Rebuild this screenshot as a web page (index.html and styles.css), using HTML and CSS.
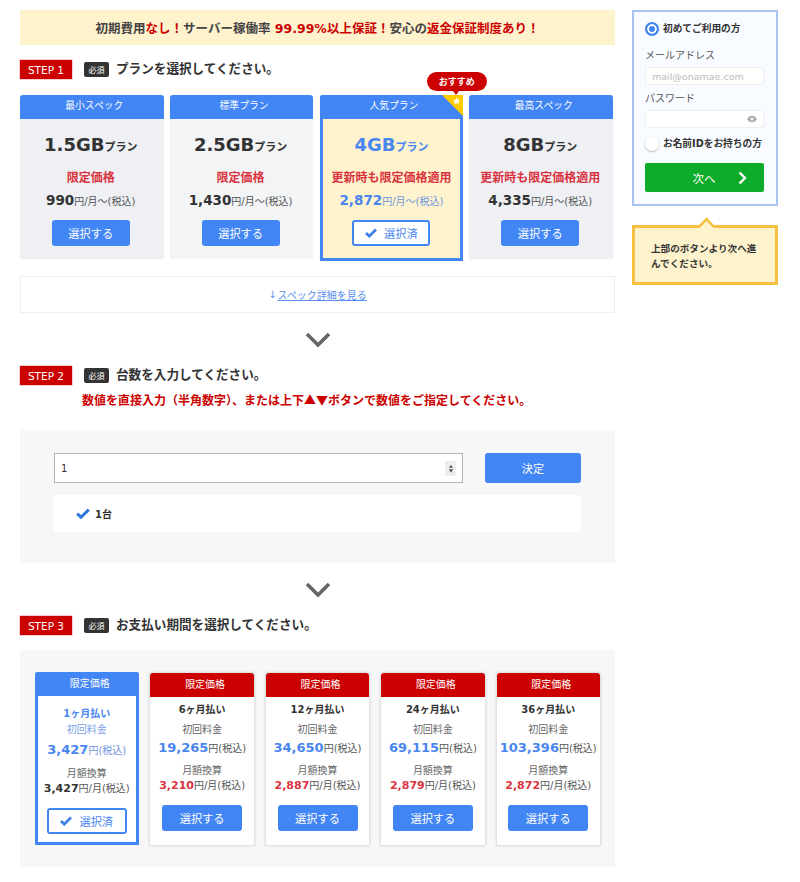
FILE: index.html
```html
<!DOCTYPE html>
<html lang="ja">
<head>
<meta charset="utf-8">
<title>プラン選択</title>
<link rel="stylesheet" href="styles.css">
</head>
<body>
<div class="page">
<main class="main">
  <div class="banner">初期費用<em>なし！</em>サーバー稼働率 <em>99.99%以上保証！</em>安心の<em>返金保証制度あり！</em></div>

  <div class="step step1"><span class="step-tag">STEP 1</span><span class="req">必須</span><span class="step-title">プランを選択してください。</span></div>
  <div class="plans">
    <div class="plan">
      <div class="plan-head">最小スペック</div>
      <div class="plan-body"><div class="plan-name">1.5GB<small>プラン</small></div><div class="plan-note">限定価格</div><div class="plan-price"><b>990</b>円/月～(税込)</div><div class="btn plan-btn">選択する</div></div>
    </div>
    <div class="plan plan-light">
      <div class="plan-head">標準プラン</div>
      <div class="plan-body"><div class="plan-name">2.5GB<small>プラン</small></div><div class="plan-note">限定価格</div><div class="plan-price"><b>1,430</b>円/月～(税込)</div><div class="btn plan-btn">選択する</div></div>
    </div>
    <div class="plan plan-on">
      <span class="bubble">おすすめ</span>
      <svg class="corner" width="21" height="21" viewBox="0 0 21 21"><path d="M0 0H21V21Z" fill="#ffcc00"/><path d="M14.5 2.2l1.1 2.5 2.7.2-2 1.8.6 2.6-2.4-1.4-2.3 1.4.6-2.6-2-1.8 2.7-.2z" fill="#fff"/></svg>
      <div class="plan-head">人気プラン</div>
      <div class="plan-body"><div class="plan-name">4GB<small>プラン</small></div><div class="plan-note">更新時も限定価格適用</div><div class="plan-price"><b>2,872</b>円/月～(税込)</div><div class="btn-on plan-btn"><svg class="check" width="12" height="10" viewBox="0 0 14 11"><path d="M1.2 5.400L5 9.200 12.800 1.400" fill="none" stroke="#3f7fe8" stroke-width="3.200"/></svg>選択済</div></div>
    </div>
    <div class="plan">
      <div class="plan-head">最高スペック</div>
      <div class="plan-body"><div class="plan-name">8GB<small>プラン</small></div><div class="plan-note">更新時も限定価格適用</div><div class="plan-price"><b>4,335</b>円/月～(税込)</div><div class="btn plan-btn">選択する</div></div>
    </div>
  </div>
  <div class="spec"><span class="spec-arrow">↓</span><a href="#">スペック詳細を見る</a></div>
  <svg class="chev chev1" width="26" height="16" viewBox="0 0 26 16"><path d="M2 2L13 13 24 2" fill="none" stroke="#666" stroke-width="3.6"/></svg>

  <div class="step"><span class="step-tag">STEP 2</span><span class="req">必須</span><span class="step-title">台数を入力してください。</span></div>
  <p class="warn">数値を直接入力（半角数字）、または上下▲▼ボタンで数値をご指定してください。</p>
  <section class="panel qty">
    <div class="qty-row">
      <div class="qty-input"><span>1</span><span class="spin"><svg width="6" height="13" viewBox="0 0 7 14"><path d="M3.500 3L6 6H1ZM3.500 12L1 8H6Z" fill="#555"/></svg></span></div>
      <div class="btn qty-btn">決定</div>
    </div>
    <div class="qty-list"><svg width="14" height="11" viewBox="0 0 14 11"><path d="M1.200 5.600L5 9.200 12.800 1.600" fill="none" stroke="#2f75e0" stroke-width="3"/></svg><span>1台</span></div>
  </section>
  <svg class="chev chev2" width="26" height="16" viewBox="0 0 26 16"><path d="M2 2L13 13 24 2" fill="none" stroke="#666" stroke-width="3.6"/></svg>

  <div class="step"><span class="step-tag">STEP 3</span><span class="req">必須</span><span class="step-title">お支払い期間を選択してください。</span></div>
  <section class="panel terms">
    <div class="term term-on">
      <div class="term-head">限定価格</div>
      <div class="term-body"><div class="term-name">1ヶ月払い</div><div class="term-label">初回料金</div><div class="term-first"><b>3,427</b>円(税込)</div><div class="term-label2">月額換算</div><div class="term-month"><b>3,427</b>円/月(税込)</div><div class="btn-on term-btn"><svg class="check" width="12" height="10" viewBox="0 0 14 11"><path d="M1.200 5.400L5 9.200 12.800 1.400" fill="none" stroke="#3f7fe8" stroke-width="3.200"/></svg>選択済</div></div>
    </div>
    <div class="term">
      <div class="term-head">限定価格</div>
      <div class="term-body"><div class="term-name">6ヶ月払い</div><div class="term-label">初回料金</div><div class="term-first"><b>19,265</b>円(税込)</div><div class="term-label2">月額換算</div><div class="term-month"><b>3,210</b>円/月(税込)</div><div class="btn term-btn">選択する</div></div>
    </div>
    <div class="term">
      <div class="term-head">限定価格</div>
      <div class="term-body"><div class="term-name">12ヶ月払い</div><div class="term-label">初回料金</div><div class="term-first"><b>34,650</b>円(税込)</div><div class="term-label2">月額換算</div><div class="term-month"><b>2,887</b>円/月(税込)</div><div class="btn term-btn">選択する</div></div>
    </div>
    <div class="term">
      <div class="term-head">限定価格</div>
      <div class="term-body"><div class="term-name">24ヶ月払い</div><div class="term-label">初回料金</div><div class="term-first"><b>69,115</b>円(税込)</div><div class="term-label2">月額換算</div><div class="term-month"><b>2,879</b>円/月(税込)</div><div class="btn term-btn">選択する</div></div>
    </div>
    <div class="term">
      <div class="term-head">限定価格</div>
      <div class="term-body"><div class="term-name">36ヶ月払い</div><div class="term-label">初回料金</div><div class="term-first"><b>103,396</b>円(税込)</div><div class="term-label2">月額換算</div><div class="term-month"><b>2,872</b>円/月(税込)</div><div class="btn term-btn">選択する</div></div>
    </div>
  </section>
</main>

<aside class="side">
  <div class="login">
    <div class="radio-row first"><span class="radio radio-on"></span>初めてご利用の方</div>
    <div class="field-label">メールアドレス</div>
    <div class="field ph">mail@onamae.com</div>
    <div class="field-label pw">パスワード</div>
    <div class="field eye"><svg width="10" height="8" viewBox="0 0 10 8"><path d="M0 4C1.500 1.500 3 .8 5 .8S8.500 1.500 10 4C8.500 6.500 7 7.200 5 7.200S1.500 6.500 0 4Z" fill="#aaa"/><circle cx="5" cy="4" r="1.600" fill="#eee"/></svg></div>
    <div class="radio-row second"><span class="radio"></span>お名前IDをお持ちの方</div>
    <div class="next">次へ<svg width="9" height="14" viewBox="0 0 9 14"><path d="M1.500 1.500L7 7 1.500 12.500" fill="none" stroke="#fff" stroke-width="2.400"/></svg></div>
  </div>
  <div class="tip">上部のボタンより次へ進んでください。</div>
</aside>
</div>
</body>
</html>
```
FILE: styles.css
```css
* { box-sizing: border-box; }
html, body { margin: 0; padding: 0; background: #fff; }
body {
  font-family: "DejaVu Sans", "Noto Sans CJK JP", sans-serif;
  color: #333;
  font-size: 12px;
}
.page { display: flex; align-items: flex-start; gap: 17px; width: 800px; height: 882px; padding: 10px 22px 0 20px; overflow: hidden; }
.main { width: 595px; flex: none; }
.side { width: 146px; flex: none; }

.banner { height: 35px; background: #fff3cd; display: flex; align-items: center; justify-content: center; font-size: 12.500px; font-weight: 700; color: #444; white-space: pre; }
.banner em { font-style: normal; color: #cc0000; }

.step { display: flex; align-items: center; height: 19px; }
.step1 { margin-top: 15px; }
.step-tag { width: 52px; height: 19px; background: #cc0000; color: #fff; font-size: 10.500px; display: flex; align-items: center; justify-content: center; box-shadow: 0 0 0 .5px #f29a9a; }
.req { width: 25px; height: 15px; margin-left: 12px; background: #333; color: #fff; font-size: 8px; border-radius: 2px; display: flex; align-items: center; justify-content: center; }
.step-title { margin-left: 7px; padding-bottom: 4px; font-size: 12.600px; font-weight: 700; color: #333; }

.plans { display: flex; justify-content: space-between; width: 593px; margin-top: 16px; height: 164px; }
.plan { width: 143.500px; background: #eef0f4; position: relative; display: flex; flex-direction: column; text-align: center; box-shadow: 0 0 1px #ddd; border-radius: 3px 3px 0 0; }
.plan-light { background: #f3f4f6; }
.plan-head { height: 24px; padding: 0 0 4px 5px; background: #4285f4; color: #fff; font-size: 9.800px; display: flex; align-items: center; justify-content: center; border-radius: 3px 3px 0 0; flex: none; }
.plan-body { flex: 1; padding-right: 2px; display: flex; flex-direction: column; align-items: center; }
.plan-name { margin-top: 14px; font-size: 18px; font-weight: 700; line-height: 24px; height: 24px; white-space: nowrap; }
.plan-name small { font-size: 11px; font-weight: 700; }
.plan-note { margin-top: 13px; font-size: 12px; font-weight: 700; color: #d9343f; line-height: 17px; }
.plan-price { margin-top: 2px; font-size: 10px; color: #555; line-height: 22px; white-space: nowrap; }
.plan-price b { font-size: 13.500px; color: #333; }
.plan-btn { margin-top: 7px; width: 78px; height: 26px; font-size: 11.200px; flex: none; }
.btn { background: #4285f4; color: #fff; border-radius: 3px; display: flex; align-items: center; justify-content: center; }
.btn-on { background: #fff; color: #4a86f0; border: 2px solid #4285f4; border-radius: 3px; display: flex; align-items: center; justify-content: center; gap: 7px; }

.plan-on { background: #fff3cd; border: 3px solid #4285f4; border-top: 0; height: 166px; }
.plan-on .plan-head { margin: 0 -3px; }
.plan-on .plan-body { padding-right: 0; }
.plan-on .plan-name { color: #4a86f0; }
.plan-on .plan-price { color: #6d94e0; }
.plan-on .plan-price b { color: #4a86f0; }
.bubble { position: absolute; top: -23px; left: 104px; width: 60px; height: 19px; background: #cc0000; color: #fff; font-size: 9px; font-weight: 700; border-radius: 10px; display: flex; align-items: center; justify-content: center; z-index: 2; }
.bubble::after { content: ""; position: absolute; left: 26px; bottom: -4px; border: 3px solid transparent; border-top: 4px solid #cc0000; border-bottom: 0; }
.corner { position: absolute; top: 0; right: -3px; z-index: 1; }

.spec { margin-top: 17px; height: 37px; border: 1px solid #eee; background: #fff; display: flex; align-items: center; justify-content: center; font-size: 10px; color: #5b8fee; }
.spec a { color: #5b8fee; }
.spec-arrow { margin-right: 1px; }

.chev { display: block; margin-left: auto; margin-right: auto; }
.chev1 { margin-top: 19px; margin-bottom: 18px; }
.chev2 { margin-top: 19px; margin-bottom: 18px; }

.warn { margin: 5px 0 0; padding-left: 62px; font-family: "Noto Sans CJK JP", sans-serif; font-size: 12px; font-weight: 700; color: #cc0000; line-height: 20px; white-space: nowrap; }

.panel { background: #f7f7f7; }
.qty { margin-top: 20px; height: 133px; padding: 23px 34px 0; }
.qty-row { display: flex; justify-content: space-between; height: 30px; }
.qty-input { width: 409px; height: 30px; background: #fff; border: 1px solid #b5b5b5; display: flex; align-items: center; justify-content: space-between; padding: 0 6px 0 6px; font-size: 10px; }
.spin { width: 11px; height: 15px; background: #eee; display: flex; align-items: center; justify-content: center; }
.qty-btn { width: 96px; height: 30px; font-size: 11.200px; }
.qty-list { margin-top: 12px; height: 37px; background: #fff; display: flex; align-items: center; gap: 5px; padding-left: 22px; font-size: 10px; font-weight: 700; }

.terms { margin-top: 15px; height: 217px; padding: 23px 15px 0; display: flex; justify-content: space-between; align-items: flex-start; }
.term { width: 103.500px; height: 172px; background: #fff; box-shadow: 0 0 0 1px #e2e2e2, 0 0 3px #aaa; border-radius: 3px 3px 0 0; text-align: center; display: flex; flex-direction: column; }
.term-head { height: 24px; padding: 0 0 3px 6px; flex: none; background: #cc0000; color: #fff; font-size: 10px; display: flex; align-items: center; justify-content: center; border-radius: 3px 3px 0 0; }
.term-body { flex: 1; display: flex; flex-direction: column; align-items: center; }
.term-name { margin-top: 6px; font-size: 10px; font-weight: 700; line-height: 14px; white-space: nowrap; }
.term-label { margin-top: 5px; font-size: 10px; color: #666; line-height: 15px; }
.term-first { margin-top: 1px; font-size: 10px; color: #555; line-height: 20px; white-space: nowrap; }
.term-first b { font-size: 13px; color: #4a86f0; }
.term-label2 { margin-top: 4px; font-size: 10px; color: #666; line-height: 15px; }
.term-month { margin-top: -1px; font-size: 10px; color: #555; line-height: 18px; white-space: nowrap; }
.term-month b { font-size: 11px; color: #d9343f; }
.term-btn { margin-top: 10px; width: 80px; height: 26px; font-size: 11.200px; flex: none; }
.term-on { box-shadow: none; background: #fff; border: 3px solid #4285f4; border-top: 0; margin-top: -1px; height: 173px; border-radius: 3px 3px 0 0; }
.term-on .term-head { background: #4285f4; margin: 0 -3px; }
.term-on .term-name { color: #4a86f0; margin-top: 11px; }
.term-on .term-label { color: #7a9fe8; margin-top: 1px; }
.term-on .term-first { color: #6d94e0; margin-top: 3px; }
.term-on .term-label2 { margin-top: 5px; }
.term-on .term-month b { color: #333; }
.term-on .term-btn { margin-top: 10px; }

.login { height: 196px; border: 2px solid #a9c3ee; background: #f8fbff; padding: 10px 12px 0 11px; }
.radio-row { display: flex; align-items: center; gap: 4px; font-size: 9.700px; font-weight: 700; line-height: 14px; white-space: nowrap; }
.radio { width: 14px; height: 14px; border-radius: 50%; background: #fff; box-shadow: 0 1px 2px #bbb; flex: none; }
.radio-on { border: 2px solid #4285f4; background: #4285f4; box-shadow: inset 0 0 0 2px #fff; }
.field-label { margin-top: 12px; font-size: 10px; color: #555; line-height: 15px; }
.field-label.pw { margin-top: 6px; }
.field { margin-top: 4px; height: 18px; background: #fff; border: 1px solid #eee; border-radius: 2px; display: flex; align-items: center; font-size: 9.500px; color: #bbb; padding: 0 6px; }
.field.eye { justify-content: flex-end; margin-top: 4px; }
.second { margin-top: 9px; }
.next { margin-top: 12px; height: 29px; background: #0dab2a; border-radius: 2px; color: #fff; font-size: 11.500px; display: flex; align-items: center; justify-content: center; gap: 22px; padding-left: 30px; }

.tip { margin-top: 19px; height: 60px; background: #fff3cd; border: 3px solid #f6c140; position: relative; padding: 13px 14px 0 16px; font-size: 9.600px; font-weight: 700; line-height: 15px; color: #333; }
.tip::before { content: ""; position: absolute; top: -9px; left: 64px; width: 12px; height: 12px; background: #fff3cd; border-top: 3px solid #f6c140; border-left: 3px solid #f6c140; transform: rotate(45deg) scale(.85); }
```
